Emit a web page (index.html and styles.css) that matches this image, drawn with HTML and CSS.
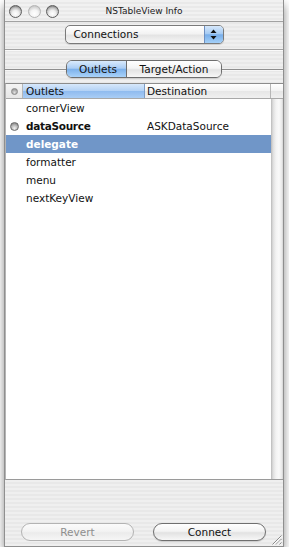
FILE: index.html
```html
<!DOCTYPE html>
<html lang="en">
<head>
    <meta charset="UTF-8">
    <title>NSTableView Info</title>
    <link rel="stylesheet" href="styles.css">
</head>
<body>
    <div class="window">
        <div class="titlebar">
            <div class="lights">
                <span class="light"></span>
                <span class="light off"></span>
                <span class="light"></span>
            </div>
            <div class="title">NSTableView Info</div>
        </div>

        <div class="popup-row">
            <div class="popup">
                <span class="popup-label">Connections</span>
                <span class="popup-arrows">
                    <svg width="7" height="11" viewBox="0 0 7 11">
                        <path d="M3.5 0.5 L6.5 4 L0.5 4 Z" fill="#111"/>
                        <path d="M3.5 10.5 L6.5 7 L0.5 7 Z" fill="#111"/>
                    </svg>
                </span>
            </div>
        </div>

        <div class="tabs-row">
            <div class="segmented">
                <span class="seg seg-outlets on">Outlets</span>
                <span class="seg seg-target">Target/Action</span>
            </div>
        </div>

        <div class="table">
            <div class="thead">
                <div class="th th-icon"><span class="dot small"></span></div>
                <div class="th th-name sorted">Outlets</div>
                <div class="th th-dest">Destination</div>
                <div class="th th-corner"></div>
            </div>
            <div class="tbody">
                <div class="rows">
                    <div class="row"><span class="cell-icon"></span><span class="cell-name">cornerView</span><span class="cell-dest"></span></div>
                    <div class="row connected"><span class="cell-icon"><span class="dot"></span></span><span class="cell-name">dataSource</span><span class="cell-dest">ASKDataSource</span></div>
                    <div class="row selected"><span class="cell-icon"></span><span class="cell-name">delegate</span><span class="cell-dest"></span></div>
                    <div class="row"><span class="cell-icon"></span><span class="cell-name">formatter</span><span class="cell-dest"></span></div>
                    <div class="row"><span class="cell-icon"></span><span class="cell-name">menu</span><span class="cell-dest"></span></div>
                    <div class="row"><span class="cell-icon"></span><span class="cell-name">nextKeyView</span><span class="cell-dest"></span></div>
                </div>
                <div class="scroll-track"></div>
            </div>
        </div>

        <div class="footer">
            <button class="aqua-button" disabled>Revert</button>
            <button class="aqua-button">Connect</button>
            <svg class="grip" width="11" height="11" viewBox="0 0 11 11">
                <path d="M10.5 1.5 L1.5 10.5 M10.5 5 L5 10.5 M10.5 8.5 L8.5 10.5" stroke="#8a8a8a" stroke-width="1"/>
                <path d="M10.5 2.5 L2.5 10.5 M10.5 6 L6 10.5 M10.5 9.5 L9.5 10.5" stroke="#fbfbfb" stroke-width="1"/>
            </svg>
        </div>
    </div>
</body>
</html>
```

FILE: styles.css
```css
* {
    margin: 0;
    padding: 0;
    box-sizing: border-box;
}

body {
    background: #fff;
    font-family: "DejaVu Sans", "Noto Sans", sans-serif;
    font-size: 10.5px;
    color: #111;
}

.window {
    margin-left: 4px;
    width: 280px;
    height: 547px;
    display: flex;
    flex-direction: column;
    border: 1px solid #8f8f8f;
    border-top: none;
    background: repeating-linear-gradient(to bottom, #efefef 0 2px, #e8e8e8 2px 4px);
    box-shadow: 0 5px 9px rgba(0, 0, 0, 0.45);
}

/* title bar */
.titlebar {
    height: 22px;
    flex: none;
    display: grid;
    grid-template-columns: 1fr auto 1fr;
    align-items: center;
    border-bottom: 1px solid #a2a2a2;
    background: repeating-linear-gradient(to bottom, #f1f1f1 0 2px, #e9e9e9 2px 4px);
}

.lights {
    display: flex;
    gap: 5.5px;
    padding-left: 4px;
    padding-top: 1px;
}

.light {
    width: 13px;
    height: 13px;
    border-radius: 50%;
    border: 1px solid #5e5e5e;
    background: radial-gradient(circle at 50% 70%, #ffffff 0, #eeeeee 35%, #c4c4c4 60%, #777 85%);
}

.light.off {
    border-color: #b4b4b4;
    background: radial-gradient(circle at 50% 70%, #ffffff 0, #f4f4f4 40%, #dadada 65%, #bcbcbc 90%);
}

.title {
    font-size: 9px;
    color: #222;
    padding-top: 1px;
}

/* popup */
.popup-row {
    flex: none;
    height: 28px;
    display: flex;
    justify-content: center;
    padding-top: 3px;
    border-bottom: 1px solid #a3a3a3;
}

.popup {
    width: 159px;
    height: 19px;
    display: flex;
    border: 1px solid #7a7a7a;
    border-radius: 5px;
    overflow: hidden;
    background: linear-gradient(to bottom, #ffffff 0%, #f3f3f3 45%, #e4e4e4 55%, #f6f6f6 100%);
    box-shadow: 0 1px 1px rgba(0, 0, 0, 0.15);
}

.popup-label {
    flex: 1;
    padding-left: 8px;
    line-height: 17px;
    font-size: 10.5px;
}

.popup-arrows {
    width: 19px;
    display: flex;
    align-items: center;
    justify-content: center;
    border-left: 1px solid #6d8fc0;
    background: linear-gradient(to bottom, #d6e8fb 0%, #a6cbf3 45%, #78aeea 52%, #a4d0f8 100%);
}

/* tabs */
.tabs-row {
    flex: none;
    height: 33px;
    display: flex;
    justify-content: center;
    padding-top: 10px;
    box-shadow: inset 0 1px #fafafa;
    background: linear-gradient(to bottom, transparent 19px, #8e8e8e 19px, #8e8e8e 20px, #f7f7f7 20px, #f7f7f7 21px, transparent 21px);
}

.segmented {
    height: 18px;
    display: flex;
    border: 1px solid #6e6e6e;
    border-radius: 6px;
    overflow: hidden;
    box-shadow: 0 1px 1px rgba(0, 0, 0, 0.12);
}

.seg {
    line-height: 16px;
    text-align: center;
    background: linear-gradient(to bottom, #ffffff 0%, #f4f4f4 45%, #e3e3e3 55%, #f7f7f7 100%);
}

.seg-outlets {
    width: 59px;
    padding-left: 3px;
}

.seg-target {
    width: 95px;
    border-left: 1px solid #6e6e6e;
}

.seg.on {
    background: linear-gradient(to bottom, #d9eafc 0%, #abcdf4 45%, #7db1eb 52%, #a9d3fa 100%);
}

/* table */
.table {
    flex: none;
    height: 397px;
    display: flex;
    flex-direction: column;
    background: #fff;
    border-top: 1px solid #8c8c8c;
    border-bottom: 1px solid #9a9a9a;
    border-left: 1px solid #b4b4b4;
}

.thead {
    height: 15px;
    display: flex;
    border-bottom: 1px solid #a8a8a8;
    flex: none;
}

.th {
    line-height: 14px;
    background: linear-gradient(to bottom, #ffffff 0%, #f2f2f2 50%, #e6e6e6 51%, #f0f0f0 100%);
    border-right: 1px solid #b6b6b6;
}

.th-icon {
    width: 17px;
    display: flex;
    align-items: center;
    justify-content: center;
    background: linear-gradient(to bottom, #f4f4f4 0%, #e6e6e6 100%);
}

.th-name {
    width: 122px;
    padding-left: 3px;
}

.th-name.sorted {
    background: linear-gradient(to bottom, #d7e8fb 0%, #b2d1f5 50%, #8fbbef 51%, #a9cdf5 100%);
    border-right-color: #7d9dc6;
}

.th-dest {
    width: 126px;
    padding-left: 2px;
}

.th-corner {
    flex: 1;
    border-right: none;
}

.tbody {
    flex: 1;
    display: flex;
}

.rows {
    width: 265px;
}

.row {
    height: 18px;
    line-height: 18px;
    display: flex;
}

.cell-icon {
    width: 17px;
    display: flex;
    align-items: center;
    justify-content: center;
}

.cell-name {
    width: 122px;
    padding-left: 3px;
}

.cell-dest {
    padding-left: 2px;
}

.row.connected .cell-name {
    font-weight: bold;
    letter-spacing: -0.3px;
}

.row.selected {
    background: #7096c8;
    color: #fff;
    font-weight: bold;
}

.dot {
    width: 9px;
    height: 9px;
    border-radius: 50%;
    border: 1px solid #6c6c6c;
    background: radial-gradient(circle at 50% 75%, #f2f2f2 0, #bdbdbd 45%, #7d7d7d 90%);
}

.dot.small {
    width: 7px;
    height: 7px;
    border-color: #8a8a8a;
    background: radial-gradient(circle at 50% 70%, #e0e0e0 0, #a8a8a8 60%, #8c8c8c 100%);
}

.scroll-track {
    flex: 1;
    background: linear-gradient(to right, #b9b9b9 0, #dedede 2px, #f3f3f3 5px, #fafafa 8px, #e8e8e8 11px, #cfcfcf 12px);
}

/* footer */
.footer {
    flex: 1;
    position: relative;
    display: flex;
    gap: 19px;
    padding: 43px 0 0 16px;
}

.aqua-button {
    width: 113px;
    height: 18px;
    border: 1px solid #6f6f6f;
    border-radius: 9px;
    font-family: "DejaVu Sans", sans-serif;
    font-size: 10.5px;
    color: #111;
    line-height: 16px;
    background: linear-gradient(to bottom, #ffffff 0%, #f3f3f3 45%, #e2e2e2 55%, #f7f7f7 100%);
    box-shadow: 0 1px 1px rgba(0, 0, 0, 0.15);
}

.aqua-button:disabled {
    border-color: #b3b3b3;
    color: #8e8e8e;
    background: linear-gradient(to bottom, #fbfbfb 0%, #f3f3f3 45%, #ebebeb 55%, #f6f6f6 100%);
    box-shadow: none;
}

.grip {
    position: absolute;
    right: 1px;
    bottom: 1px;
}
```
